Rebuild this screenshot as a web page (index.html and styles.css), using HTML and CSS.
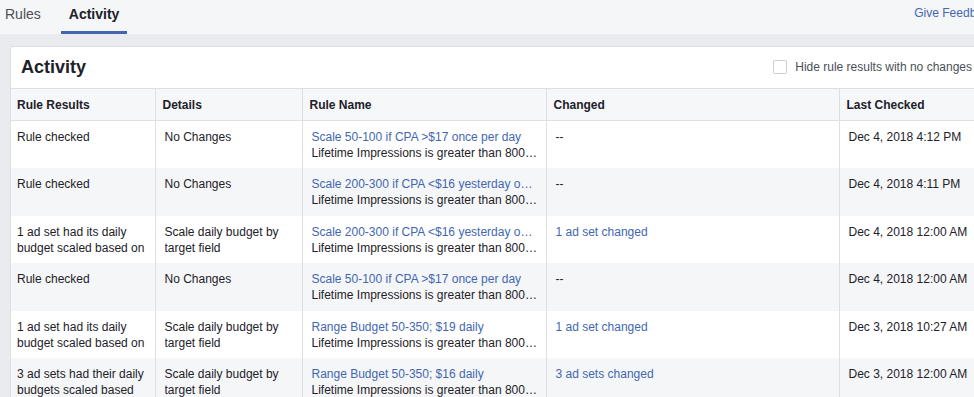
FILE: index.html
```html
<!DOCTYPE html>
<html lang="en">
<head>
    <meta charset="UTF-8">
    <meta name="viewport" content="width=device-width, initial-scale=1.0">
    <title>Automated Rules - Activity</title>
    <link rel="stylesheet" href="styles.css">
</head>
<body>

<div class="page">
    <div class="topbar">
        <div class="tabs">
            <a class="tab">Rules</a>
            <a class="tab active">Activity</a>
        </div>
        <a class="feedback">Give Feedback</a>
    </div>

    <div class="content">
        <div class="card">
            <div class="card-header">
                <h2>Activity</h2>
                <label class="hide-toggle">
                    <span class="checkbox"></span>
                    Hide rule results with no changes
                </label>
            </div>

            <table class="activity-table">
                <colgroup>
                    <col class="col-results">
                    <col class="col-details">
                    <col class="col-name">
                    <col class="col-changed">
                    <col>
                </colgroup>
                <thead>
                    <tr>
                        <th>Rule Results</th>
                        <th>Details</th>
                        <th>Rule Name</th>
                        <th>Changed</th>
                        <th>Last Checked</th>
                    </tr>
                </thead>
                <tbody>
                    <tr>
                        <td><div class="clamp">Rule checked</div></td>
                        <td><div class="clamp">No Changes</div></td>
                        <td>
                            <a class="link line">Scale 50-100 if CPA &gt;$17 once per day</a>
                            <div class="line">Lifetime Impressions is greater than 8000 and Cost per Result is greater than $17</div>
                        </td>
                        <td>--</td>
                        <td>Dec 4, 2018 4:12 PM</td>
                    </tr>
                    <tr>
                        <td><div class="clamp">Rule checked</div></td>
                        <td><div class="clamp">No Changes</div></td>
                        <td>
                            <a class="link line">Scale 200-300 if CPA &lt;$16 yesterday once per day</a>
                            <div class="line">Lifetime Impressions is greater than 8000 and Cost per Result is less than $16</div>
                        </td>
                        <td>--</td>
                        <td>Dec 4, 2018 4:11 PM</td>
                    </tr>
                    <tr>
                        <td><div class="clamp">1 ad set had its daily budget scaled based on target field</div></td>
                        <td><div class="clamp">Scale daily budget by target field</div></td>
                        <td>
                            <a class="link line">Scale 200-300 if CPA &lt;$16 yesterday once per day</a>
                            <div class="line">Lifetime Impressions is greater than 8000 and Cost per Result is less than $16</div>
                        </td>
                        <td><a class="link">1 ad set changed</a></td>
                        <td>Dec 4, 2018 12:00 AM</td>
                    </tr>
                    <tr>
                        <td><div class="clamp">Rule checked</div></td>
                        <td><div class="clamp">No Changes</div></td>
                        <td>
                            <a class="link line">Scale 50-100 if CPA &gt;$17 once per day</a>
                            <div class="line">Lifetime Impressions is greater than 8000 and Cost per Result is greater than $17</div>
                        </td>
                        <td>--</td>
                        <td>Dec 4, 2018 12:00 AM</td>
                    </tr>
                    <tr>
                        <td><div class="clamp">1 ad set had its daily budget scaled based on target field</div></td>
                        <td><div class="clamp">Scale daily budget by target field</div></td>
                        <td>
                            <a class="link line">Range Budget 50-350; $19 daily</a>
                            <div class="line">Lifetime Impressions is greater than 8000 and Cost per Result is less than $19</div>
                        </td>
                        <td><a class="link">1 ad set changed</a></td>
                        <td>Dec 3, 2018 10:27 AM</td>
                    </tr>
                    <tr>
                        <td><div class="clamp">3 ad sets had their daily budgets scaled based on target field</div></td>
                        <td><div class="clamp">Scale daily budget by target field</div></td>
                        <td>
                            <a class="link line">Range Budget 50-350; $16 daily</a>
                            <div class="line">Lifetime Impressions is greater than 8000 and Cost per Result is less than $16</div>
                        </td>
                        <td><a class="link">3 ad sets changed</a></td>
                        <td>Dec 3, 2018 12:00 AM</td>
                    </tr>
                </tbody>
            </table>
        </div>
    </div>
</div>

</body>
</html>
```

FILE: styles.css
```css
body {
    margin: 0;
    background-color: #e9ebee;
    font-family: "Liberation Sans", Arial, sans-serif;
    font-size: 12px;
    color: #1d2129;
    overflow: hidden;
}
.page {
    width: 1000px;
}

/* Top tab bar */
.topbar {
    display: flex;
    justify-content: space-between;
    align-items: flex-start;
    height: 34px;
    padding-right: 5px;
    background-color: #f5f6f7;
}
.tabs {
    display: flex;
    gap: 12px;
    margin-left: -3px;
}
.tab {
    display: block;
    height: 31px;
    line-height: 29px;
    padding: 0 8px;
    font-size: 14px;
    color: #4b4f56;
    border-bottom: 3px solid transparent;
}
.tab.active {
    color: #1d2129;
    font-weight: bold;
    border-bottom-color: #4267b2;
}
.feedback {
    line-height: 27px;
    color: #4267b2;
}

/* Card */
.content {
    padding: 12px 15px 0 10px;
}
.card {
    background-color: #fff;
    border: 1px solid #dddfe2;
    border-bottom: none;
    border-radius: 3px 3px 0 0;
}
.card-header {
    display: flex;
    justify-content: space-between;
    align-items: center;
    height: 41px;
    padding: 0 12px 0 10px;
}
.card-header h2 {
    margin: 0;
    font-size: 18px;
    font-weight: bold;
}
.hide-toggle {
    display: flex;
    align-items: center;
    gap: 8px;
    color: #4b4f56;
    margin-top: -1px;
}
.checkbox {
    width: 12px;
    height: 12px;
    border: 1px solid #ccd0d5;
    border-radius: 2px;
    background-color: #fff;
}

/* Table */
.activity-table {
    width: 100%;
    border-collapse: collapse;
    table-layout: fixed;
}
.col-results { width: 144px; }
.col-details { width: 147px; }
.col-name { width: 244px; }
.col-changed { width: 293px; }

.activity-table th {
    height: 31px;
    padding: 0 8px 0 7px;
    text-align: left;
    font-weight: bold;
    background-color: #f6f7f9;
    border-top: 1px solid #dddfe2;
    border-bottom: 1px solid #dddfe2;
    border-left: 1px solid #dddfe2;
}
.activity-table td {
    height: 47.6px;
    box-sizing: border-box;
    padding: 8px 8px 0 9px;
    vertical-align: top;
    line-height: 16px;
    border-left: 1px solid #dddfe2;
}
.activity-table th:first-child,
.activity-table td:first-child {
    border-left: none;
    padding-left: 6px;
    padding-right: 6px;
}
.activity-table tbody tr:nth-child(even) td {
    background-color: #f5f6f7;
}
.clamp {
    max-height: 32px;
    overflow: hidden;
}
.line {
    display: block;
    white-space: nowrap;
    overflow: hidden;
    text-overflow: ellipsis;
}
.link {
    color: #4267b2;
    text-decoration: none;
}
```
